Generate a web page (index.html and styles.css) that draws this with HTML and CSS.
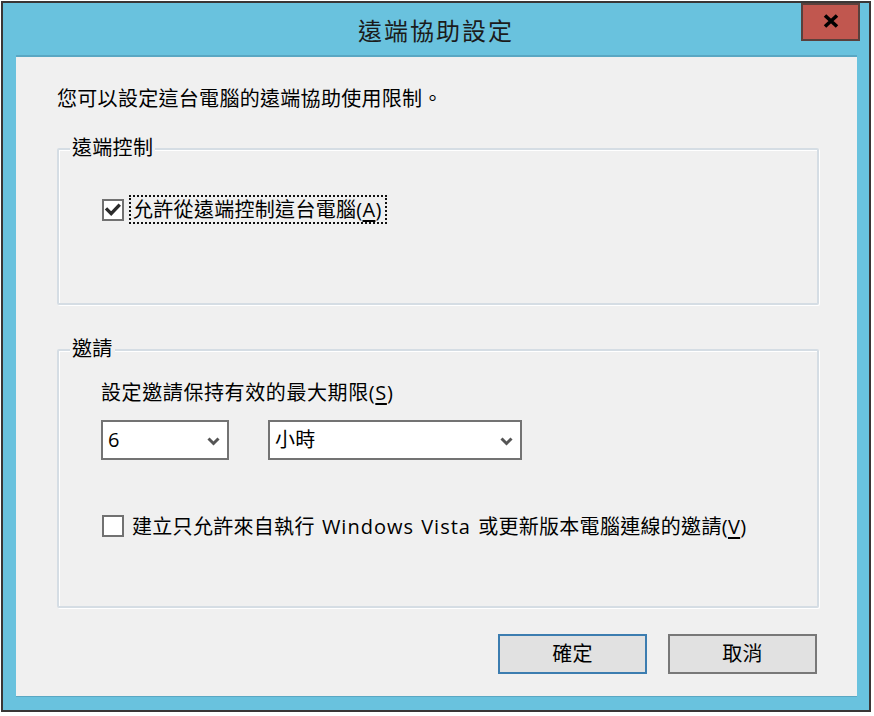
FILE: index.html
```html
<!DOCTYPE html>
<html lang="zh-Hant">
<head>
<meta charset="utf-8">
<title>遠端協助設定</title>
<link rel="stylesheet" href="styles.css">
</head>
<body>
<div class="window">
  <div class="titlebar">
    <div class="title">遠端協助設定</div>
    <div class="close">
      <svg width="16" height="14" viewBox="0 0 16 14"><path d="M2 1.5 L14 12.5 M14 1.5 L2 12.5" stroke="#000" stroke-width="3.6" fill="none"/></svg>
    </div>
  </div>
  <div class="frame">
    <div class="intro">您可以設定這台電腦的遠端協助使用限制。</div>

    <div class="group group-remote">
      <div class="legend">遠端控制</div>
      <div class="cb-row">
        <span class="checkbox">
          <svg width="18" height="18" viewBox="0 0 18 18"><path d="M3.2 8.6 L7.2 12.6 L14.6 4.8" stroke="#2b2b2b" stroke-width="3.4" fill="none" stroke-linecap="square"/></svg>
        </span>
        <span class="cb-label focused">允許從遠端控制這台電腦(<u>A</u>)</span>
      </div>
    </div>

    <div class="group group-invite">
      <div class="legend">邀請</div>
      <div class="field-label">設定邀請保持有效的最大期限(<u>S</u>)</div>
      <div class="selects">
        <div class="select select-num">
          <span>6</span>
          <svg width="13" height="9" viewBox="0 0 13 9"><path d="M1.5 1.5 L6.5 6.5 L11.5 1.5" stroke="#555" stroke-width="3" fill="none"/></svg>
        </div>
        <div class="select select-unit">
          <span>小時</span>
          <svg width="13" height="9" viewBox="0 0 13 9"><path d="M1.5 1.5 L6.5 6.5 L11.5 1.5" stroke="#555" stroke-width="3" fill="none"/></svg>
        </div>
      </div>
      <div class="cb-row cb-row-2">
        <span class="checkbox"></span>
        <span class="cb-label">建立只允許來自執行<span class="latin"> Windows Vista </span>或更新版本電腦連線的邀請(<u>V</u>)</span>
      </div>
    </div>

    <div class="buttons">
      <div class="btn btn-default">確定</div>
      <div class="btn">取消</div>
    </div>
  </div>
</div>
</body>
</html>
```
FILE: styles.css
```css
* { box-sizing: border-box; }
html, body { margin: 0; padding: 0; background: #ffffff; }
body {
  font-family: "Open Sans", "Noto Sans CJK TC", sans-serif;
  color: #000;
  font-size: 20px;
  letter-spacing: 0.3px;
}
.window {
  margin: 1px 0 0 1px;
  width: 870px;
  height: 711px;
  border: 2px solid #3a3636;
  background: #69c2de;
  display: flex;
  flex-direction: column;
}
.titlebar {
  height: 52px;
  flex: none;
  display: grid;
  grid-template-columns: 1fr auto 1fr;
}
.title {
  grid-column: 2;
  font-size: 24px;
  letter-spacing: 2px;
  line-height: 28px;
  margin-top: 14px;
  color: #1b1b1b;
}
.close {
  grid-column: 3;
  justify-self: end;
  width: 59px;
  height: 38px;
  margin-right: 9px;
  background: #c1574f;
  border: 2px solid #5a403c;
  display: flex;
  align-items: center;
  justify-content: center;
  padding-bottom: 2px;
}
.frame {
  flex: 1;
  margin: 0 12px 13px 13px;
  background: #f0f0f0;
  border-top: 2px solid #5aa7c3;
  border-bottom: 1px solid #5aa7c3;
  padding: 30px 38px 0 41px;
  display: flex;
  flex-direction: column;
}
.intro { line-height: 24px; }
.group {
  position: relative;
  border: 2px solid #d5dde4;
  border-radius: 2px;
  box-shadow: 1px 1px 0 #ffffff, inset 1px 1px 0 #ffffff;
}
.legend {
  position: absolute;
  left: 11px;
  top: -14px;
  padding: 0 2px;
  line-height: 24px;
  background: #f0f0f0;
}
.group-remote {
  margin-top: 37px;
  height: 157px;
  padding: 45px 0 0 43px;
}
.group-invite {
  margin-top: 44px;
  height: 259px;
  padding: 30px 0 0 42px;
}
.cb-row {
  display: flex;
  align-items: center;
  height: 29px;
}
.checkbox {
  width: 22px;
  height: 22px;
  border: 2px solid #717171;
  background: #ffffff;
  display: flex;
  align-items: center;
  justify-content: center;
  flex: none;
}
.cb-label {
  margin-left: 5px;
  line-height: 25px;
  padding: 0 3px 0 2px;
  border: 2px solid transparent;
  white-space: nowrap;
}
.cb-label.focused { border: 2px dotted #111; }
.cb-label u { text-underline-offset: 3px; text-decoration-thickness: 1.5px; }
.latin { letter-spacing: 1px; word-spacing: 1px; }
.field-label { line-height: 24px; letter-spacing: 0.6px; }
.field-label u { text-underline-offset: 3px; text-decoration-thickness: 1.5px; }
.selects {
  margin-top: 15px;
  display: flex;
  gap: 39px;
}
.select {
  height: 40px;
  border: 2px solid #737373;
  background: #ffffff;
  display: flex;
  align-items: center;
  justify-content: space-between;
  padding: 0 7px 0 5px;
  line-height: 24px;
}
.select-num { width: 128px; }
.select-unit { width: 254px; }
.select svg { margin-top: 2px; }
.cb-row-2 { margin-top: 52px; height: 28px; padding-left: 1px; }
.cb-row-2 .cb-label { margin-left: 4px; }
.buttons {
  margin-top: 26px;
  display: flex;
  justify-content: flex-end;
  gap: 21px;
  padding-right: 2px;
}
.btn {
  width: 149px;
  height: 40px;
  background: #e1e1e1;
  border: 2px solid #787878;
  display: flex;
  align-items: center;
  justify-content: center;
  line-height: 24px;
}
.btn-default { border-color: #3c7db0; }
```
